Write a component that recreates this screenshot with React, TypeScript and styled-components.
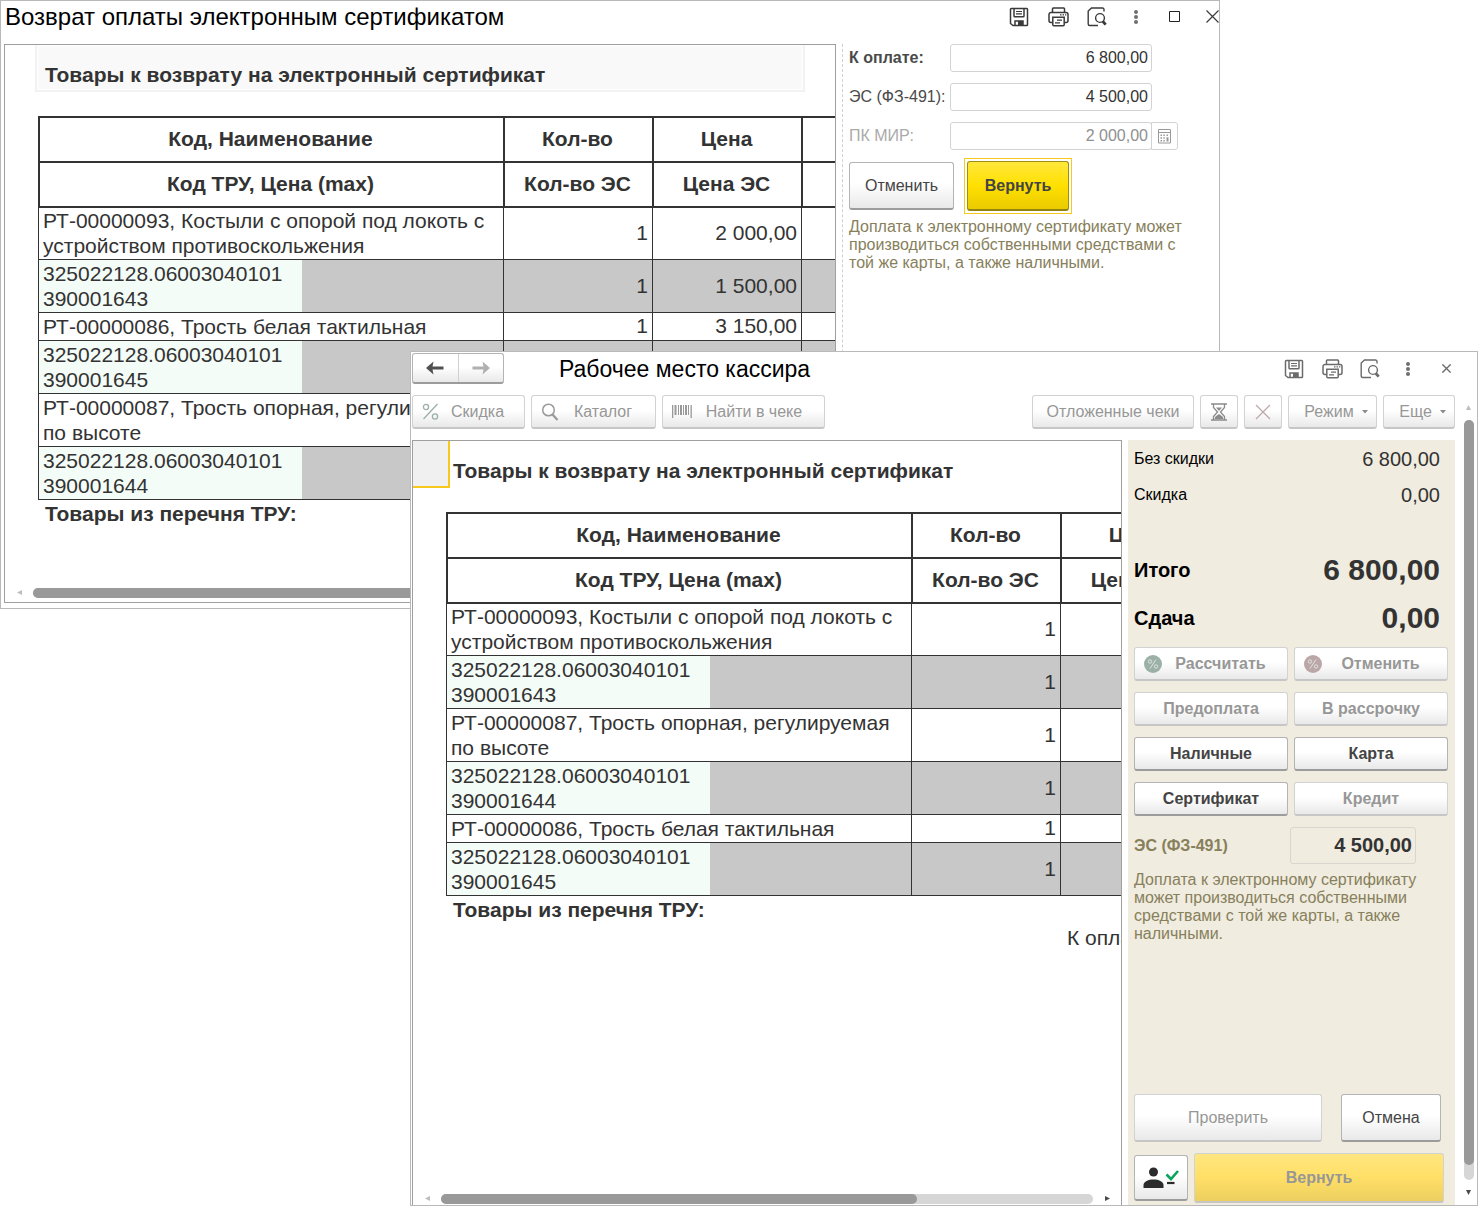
import React from "react";
import styled, { createGlobalStyle, css } from "styled-components";

const GlobalStyle = createGlobalStyle`
  *, *::before, *::after { box-sizing: border-box; }
  body {
    margin: 0;
    background: #fff;
    color: #333;
    font-family: "Liberation Sans", Arial, sans-serif;
    font-size: 16px;
    line-height: 18px;
  }
  button, input { font: inherit; color: inherit; }
`;

/* ---------- desktop and windows ---------- */

const Desktop = styled.main`
  display: grid;
  grid-template-columns: minmax(0, 1fr);
  min-height: 100vh;
`;

const AppWindow = styled.section`
  grid-area: 1 / 1;
  display: flex;
  flex-direction: column;
  background: #fff;
  border: 1px solid #b9b9b9;
`;

const RefundWindow = styled(AppWindow)`
  align-self: start;
  margin-right: 259px;
`;

const CashierWindow = styled(AppWindow)`
  z-index: 1;
  margin: 351px 1px 2px 410px;
`;

const TitleBar = styled.header<{ $front?: boolean }>`
  display: flex;
  align-items: center;
  justify-content: space-between;
  height: ${(p) => (p.$front ? 43 : 31)}px;
  padding: ${(p) => (p.$front ? "0 20px 10px 1px" : "0 0 0 4px")};
  margin-bottom: ${(p) => (p.$front ? 0 : 12)}px;
`;

const TitleGroup = styled.div`
  display: flex;
  align-items: center;
  gap: 55px;
`;

const WindowTitle = styled.h1<{ $large?: boolean }>`
  margin: 0;
  color: #000;
  font-size: ${(p) => (p.$large ? 24 : 23)}px;
  line-height: 28px;
  font-weight: 400;
  white-space: nowrap;
`;

const WindowTools = styled.div<{ $front?: boolean }>`
  display: flex;
  align-items: center;
  gap: ${(p) => (p.$front ? 16 : 17)}px;
  color: ${(p) => (p.$front ? "#6b6b6b" : "#3a3a3a")};
`;

const ToolButton = styled.button<{ $edge?: boolean }>`
  display: flex;
  align-items: center;
  justify-content: center;
  width: ${(p) => (p.$edge ? 14 : 22)}px;
  height: 24px;
  margin-left: ${(p) => (p.$edge ? 2 : 0)}px;
  padding: 0;
  border: 0;
  background: none;
`;

/* ---------- buttons and fields ---------- */

const PushButton = styled.button<{
  $width?: number;
  $tall?: boolean;
  $bold?: boolean;
  $icon?: boolean;
  $menu?: boolean;
}>`
  display: flex;
  align-items: center;
  justify-content: center;
  flex: none;
  width: ${(p) => (p.$width ? `${p.$width}px` : "auto")};
  height: ${(p) => (p.$tall ? 48 : 34)}px;
  padding: 0;
  border: 1px solid #b4b4b4;
  border-bottom: 2px solid #9c9c9c;
  border-radius: 3px;
  background: linear-gradient(#fff 45%, #e9e9e9);
  color: #444;
  font-weight: ${(p) => (p.$bold ? 700 : 400)};
  white-space: nowrap;
  &:disabled {
    color: #979797;
    border-color: #d2d2d2;
    border-bottom-color: #c6c6c6;
  }
  ${(p) =>
    p.$icon &&
    css`
      padding: 0 8px 0 9px;
      & > span { flex: 1; text-align: center; }
    `}
  ${(p) =>
    p.$menu &&
    css`
      gap: 8px;
      padding-left: 7px;
    `}
`;

const FocusFrame = styled.div`
  margin-left: 10px;
  padding: 2px;
  border: 1px solid #f8c81c;
`;

const PrimaryButton = styled(PushButton)`
  width: 102px;
  height: 50px;
  border: 1px solid #a08e10;
  border-bottom: 2px solid #93830f;
  background: linear-gradient(#ffe83c, #ffe000 50%, #eacb00);
  color: #444;
  font-weight: 700;
`;

const SubmitButton = styled(PushButton)`
  flex: 1;
  height: 50px;
  margin-right: 4px;
  background: linear-gradient(#ffe680, #ffdf66 50%, #eccf60);
  font-weight: 700;
`;

const TextInput = styled.input`
  width: 202px;
  height: 28px;
  padding: 0 3px;
  border: 1px solid #d3d3d3;
  border-radius: 3px;
  background: #fff;
  color: #333;
  text-align: right;
  &:disabled { color: #8f8f8f; }
`;

/* ---------- spreadsheet area ---------- */

const Sheet = styled.div<{ $open?: boolean }>`
  flex: 1;
  min-width: 0;
  display: flex;
  flex-direction: column;
  overflow: hidden;
  border: 1px solid #9f9f9f;
  border-bottom-width: ${(p) => (p.$open ? 0 : 1)}px;
`;

const Band = styled.div`
  display: flex;
  align-items: stretch;
  height: 47px;
  margin-bottom: 24px;
`;

const BandTitle = styled.h2<{ $marked?: boolean }>`
  display: flex;
  align-items: flex-end;
  margin: 0;
  font-size: 21px;
  line-height: 25px;
  white-space: nowrap;
  ${(p) =>
    p.$marked
      ? css`
          flex: 1;
          margin: 0 30px;
          padding: 0 8px 3px;
          border: 2px solid #f2f2f2;
          border-top: 0;
          background: #f9f9f9;
          box-shadow: inset 0 0 0 1px #fff;
        `
      : css`
          padding: 0 3px 5px;
        `}
`;

const ActiveCell = styled.div`
  width: 37px;
  border: solid #f8c81c;
  border-width: 0 2px 2px 0;
  background: #f0f0f0;
`;

const GoodsTable = styled.table`
  width: 912px;
  margin-left: 33px;
  table-layout: fixed;
  border-collapse: separate;
  border-spacing: 0;
  font-size: 21px;
  line-height: 25px;
`;

const HeadCell = styled.th`
  height: 45px;
  padding: 0 2px 2px 0;
  border: solid #333;
  border-width: 2px 0 0 2px;
`;

const NameCell = styled.td<{ $first?: boolean }>`
  padding: ${(p) => (p.$first ? "0 4px 1px" : "1px 4px")};
  border: solid #333;
  border-width: ${(p) => (p.$first ? 2 : 1)}px 0 0 1px;
`;

const CodeCell = styled(NameCell)`
  background: #f4fcf7;
`;

const ShadeCell = styled.td`
  background: #c8c8c8;
  border-top: 1px solid #333;
`;

const NumberCell = styled(NameCell)<{ $shade?: boolean }>`
  padding: 0 4px 2px;
  background: ${(p) => (p.$shade ? "#c8c8c8" : "transparent")};
  text-align: right;
  white-space: nowrap;
`;

const FootCell = styled.td<{ $closing?: boolean; $bold?: boolean }>`
  height: 28px;
  padding: 0 7px;
  border-top: ${(p) => (p.$closing ? "1px solid #333" : "0")};
  font-weight: ${(p) => (p.$bold ? 700 : 400)};
  white-space: nowrap;
`;

/* ---------- scroll bars ---------- */

const ScrollBar = styled.div<{ $vertical?: boolean; $low?: boolean }>`
  display: flex;
  align-items: center;
  ${(p) =>
    p.$vertical
      ? css`
          flex: none;
          flex-direction: column;
          width: 22px;
          padding-left: 5px;
        `
      : css`
          margin-top: auto;
          height: ${p.$low ? 12 : 18}px;
          padding-bottom: 1px;
        `}
`;

const ScrollEnd = styled.span<{ $faint?: boolean; $vertical?: boolean }>`
  display: flex;
  align-items: center;
  justify-content: center;
  flex: none;
  width: ${(p) => (p.$vertical ? 10 : 28)}px;
  height: ${(p) => (p.$vertical ? 25 : 10)}px;
  color: ${(p) => (p.$faint ? "#bdbdbd" : "#4a4a4a")};
`;

const ScrollTrack = styled.div<{ $vertical?: boolean }>`
  flex: 1;
  width: ${(p) => (p.$vertical ? "10px" : "auto")};
  height: ${(p) => (p.$vertical ? "auto" : "10px")};
  border-radius: 5px;
  background: #d6d6d6;
`;

const ScrollThumb = styled.div<{ $vertical?: boolean }>`
  width: ${(p) => (p.$vertical ? "10px" : "73%")};
  height: ${(p) => (p.$vertical ? "98%" : "10px")};
  border-radius: 5px;
  background: #999;
`;

/* ---------- refund window ---------- */

const RefundBody = styled.div`
  display: flex;
  min-height: 559px;
  margin: 0 0 5px 3px;
`;

const RefundSide = styled.form`
  flex: 0 0 377px;
  margin-left: 6px;
  padding: 0 25px 0 6px;
  border-left: 1px dashed #d0d0d0;
`;

const FieldRow = styled.div`
  display: flex;
  align-items: center;
  height: 28px;
  margin-bottom: 11px;
`;

const FieldLabel = styled.label<{ $bold?: boolean; $muted?: boolean }>`
  flex: 0 0 101px;
  color: ${(p) => (p.$muted ? "#aaa" : "#4a4a4a")};
  font-weight: ${(p) => (p.$bold ? 700 : 400)};
  white-space: nowrap;
`;

const CalcButton = styled.button`
  display: flex;
  align-items: center;
  justify-content: center;
  width: 27px;
  height: 28px;
  margin-left: -1px;
  padding: 0;
  border: 1px solid #d3d3d3;
  border-radius: 0 3px 3px 0;
  background: #fff;
  color: #999;
`;

const ActionRow = styled.div`
  display: flex;
  align-items: center;
  margin: -3px 0 4px;
`;

const Note = styled.p`
  margin: 0;
  color: #87805b;
`;

/* ---------- cashier window ---------- */

const NavGroup = styled.div`
  display: flex;
  width: 92px;
  height: 31px;
  border: 1px solid #b4b4b4;
  border-bottom: 2px solid #9c9c9c;
  border-radius: 3px;
  background: linear-gradient(#fff 45%, #e9e9e9);
`;

const NavButton = styled.button`
  display: flex;
  align-items: center;
  justify-content: center;
  flex: 1;
  padding: 0;
  border: 0;
  background: none;
  color: #505050;
  & + & { border-left: 1px solid #d0d0d0; }
  &:disabled { color: #b0b0b0; }
`;

const CashierBody = styled.div`
  flex: 1;
  display: flex;
  padding-left: 1px;
`;

const Workspace = styled.div`
  flex: 1;
  min-width: 0;
  display: flex;
  flex-direction: column;
`;

const Toolbar = styled.div`
  display: flex;
  justify-content: space-between;
  gap: 6px;
  margin-bottom: 11px;
`;

const ToolGroup = styled.div`
  display: flex;
  gap: 6px;
`;

const Split = styled.div`
  flex: 1;
  display: flex;
  gap: 6px;
`;

const PaySide = styled.aside`
  flex: 0 0 327px;
  display: flex;
  flex-direction: column;
  padding: 1px 7px 2px 6px;
  background: #f0ece0;
`;

const Totals = styled.dl`
  margin: 0 8px 5px 0;
`;

const TotalRow = styled.div<{ $strong?: boolean }>`
  display: flex;
  align-items: center;
  justify-content: space-between;
  height: ${(p) => (p.$strong ? 48 : 36)}px;
  color: #000;
  font-weight: ${(p) => (p.$strong ? 700 : 400)};
  font-size: ${(p) => (p.$strong ? 20 : 16)}px;
  dd {
    margin: 0;
    color: #333;
    font-size: ${(p) => (p.$strong ? 30 : 20)}px;
    line-height: 36px;
  }
`;

const TotalGap = styled.div`
  height: 33px;
`;

const PayGrid = styled.div`
  display: grid;
  grid-template-columns: 1fr 1fr;
  gap: 11px 6px;
  margin-bottom: 11px;
`;

const CertificateRow = styled.div`
  display: flex;
  align-items: center;
  justify-content: space-between;
  margin: 0 32px 7px 0;
`;

const CertificateLabel = styled.label`
  color: #87805b;
  font-weight: 700;
`;

const CertificateInput = styled.input`
  width: 126px;
  height: 37px;
  padding: 0 3px;
  border: 1px solid #d8d6cf;
  border-radius: 3px;
  background: transparent;
  color: #333;
  font-size: 20px;
  font-weight: 700;
  text-align: right;
`;

const BottomActions = styled.div`
  display: flex;
  flex-direction: column;
  gap: 11px;
  margin-top: auto;
`;

const BottomRow = styled.div`
  display: flex;
  align-items: center;
  gap: 6px;
`;

const SpacedRow = styled(BottomRow)`
  gap: 19px;
  padding-right: 7px;
`;

const StretchButton = styled(PushButton)`
  flex: 1;
`;

const UserButton = styled(PushButton)`
  width: 54px;
  height: 46px;
`;

/* ---------- icons ---------- */

const SaveIcon = () => (
  <svg width="20" height="20" viewBox="0 0 20 20" fill="none" stroke="currentColor" strokeWidth="1.5" aria-hidden="true">
    <path d="M2.300 1.500h15.400a.8.8 0 0 1 .8.8v15.400a.8.8 0 0 1-.8.8H4L1.500 16.500V2.300a.8.8 0 0 1 .8-.8z" />
    <path d="M5 1.500v7.500a.8.8 0 0 0 .8.8h8.400a.8.8 0 0 0 .8-.8V1.500" />
    <path d="M7 4.500h6M7 6.800h6" strokeWidth="1.200" />
    <path d="M6 18.500V14h8v4.500" />
    <path d="M9 14h5v4.500H9z" fill="currentColor" stroke="none" />
  </svg>
);

const PrintIcon = () => (
  <svg width="21" height="20" viewBox="0 0 21 20" fill="none" stroke="currentColor" strokeWidth="1.500" aria-hidden="true">
    <path d="M4.500 5.500V1.800a.8.8 0 0 1 .8-.8h10.400a.8.8 0 0 1 .8.8v3.700" />
    <path d="M4.500 15.500H3a2 2 0 0 1-2-2v-6a2 2 0 0 1 2-2h15a2 2 0 0 1 2 2v6a2 2 0 0 1-2 2h-1.500" />
    <path d="M4.800 10.200h11.400v7.600a1 1 0 0 1-1 1H5.800a1 1 0 0 1-1-1z" />
    <path d="M9 13.200h5M7 15.800h5" strokeWidth="1.300" />
    <path d="M12 7.800h1.500M14.500 7.800H16M17 7.800h1.300" strokeWidth="1.200" />
  </svg>
);

const PreviewIcon = () => (
  <svg width="20" height="20" viewBox="0 0 20 20" fill="none" stroke="currentColor" strokeWidth="1.400" aria-hidden="true">
    <path d="M17 4.500V2.500a1.500 1.500 0 0 0-1.500-1.500H4.500L1.200 4v13a1.500 1.500 0 0 0 1.500 1.500H11" />
    <circle cx="13" cy="11" r="4.400" />
    <path d="M15.700 14.300l3 3.300" strokeWidth="2.800" />
  </svg>
);

const DotsIcon = () => (
  <svg width="6" height="16" viewBox="0 0 6 16" fill="#6f6f6f" aria-hidden="true">
    <circle cx="3" cy="3" r="2" />
    <circle cx="3" cy="8" r="2" />
    <circle cx="3" cy="13" r="2" />
  </svg>
);

const MaximizeIcon = () => (
  <svg width="12" height="12" viewBox="0 0 12 12" fill="none" stroke="#222" aria-hidden="true">
    <path d="M.5.5h10v10H.5z" />
  </svg>
);

const CloseIcon = ({ size = 13, weight = 1.2 }: { size?: number; weight?: number }) => (
  <svg width={size} height={size} viewBox="0 0 13 13" fill="none" stroke="currentColor" strokeWidth={weight} aria-hidden="true">
    <path d="M.5.5l12 12M12.500.5l-12 12" />
  </svg>
);

const CalcIcon = () => (
  <svg width="13" height="15" viewBox="0 0 13 15" aria-hidden="true">
    <path d="M.5.5h12v13.500H.5z" fill="none" stroke="currentColor" />
    <path d="M.5 3.500h12" stroke="currentColor" />
    <path d="M2.500 5.500H4V7H2.500zM5.300 5.500h1.500V7H5.300zM8.500 5.500H10V7H8.500zM2.500 8.300H4v1.500H2.500zM5.300 8.300h1.500v1.500H5.300zM2.500 11H4v1.500H2.500zM5.300 11h1.500v1.500H5.300zM8.500 8.300h2v4.200h-2z" fill="currentColor" />
  </svg>
);

const ArrowIcon = ({ forward }: { forward?: boolean }) => (
  <svg width="18" height="14" viewBox="0 0 18 14" aria-hidden="true">
    <path
      d={forward ? "M18 7L10.500 .5 11.500 5.500H.5v3h11L10.500 13.500z" : "M0 7L7.500 .5 6.500 5.500h11v3h-11L7.500 13.500z"}
      fill="currentColor"
    />
  </svg>
);

const PercentIcon = () => (
  <svg width="17" height="17" viewBox="0 0 17 17" fill="none" stroke="#9bb0a8" strokeWidth="1.300" aria-hidden="true">
    <circle cx="4" cy="4" r="2.600" />
    <circle cx="13" cy="13.500" r="2.600" />
    <path d="M15.500 1L1.500 16" />
  </svg>
);

const SearchIcon = () => (
  <svg width="18" height="18" viewBox="0 0 18 18" fill="none" stroke="#999" strokeWidth="1.500" aria-hidden="true">
    <circle cx="7.500" cy="7" r="5.800" />
    <path d="M11.500 11.500l5 5.500" strokeWidth="2.200" />
  </svg>
);

const BarcodeIcon = () => (
  <svg width="20" height="13" viewBox="0 0 20 13" fill="#999" aria-hidden="true">
    <path d="M0 0h1.300v13H0zM2.500 0h2v10h-2zM6 0h1v10H6zM8 0h2v10H8zM11 0h1v10h-1zM13 0h2v10h-2zM16 0h1v10h-1zM18.500 0h1.300v13h-1.300z" />
  </svg>
);

const HourglassIcon = () => (
  <svg width="16" height="18" viewBox="0 0 16 18" fill="none" stroke="#8b8b8b" strokeWidth="1.300" aria-hidden="true">
    <path d="M0 1h16M0 17h16" strokeWidth="1.600" />
    <path d="M2.500 1v3.500L6.500 9l-4 4.500V17M13.500 1v3.500L9.500 9l4 4.500V17" />
    <path d="M5 4.500h6L8 8zM3.500 16l1-2.500L8 11l3.500 2.500 1 2.500z" fill="#8b8b8b" stroke="none" />
  </svg>
);

const CancelIcon = () => (
  <svg width="16" height="16" viewBox="0 0 16 16" fill="none" stroke="#bda9a9" strokeWidth="1.300" aria-hidden="true">
    <path d="M1 1l14 14M15 1L1 15" />
  </svg>
);

const RoundPercentIcon = ({ tint }: { tint: string }) => (
  <svg width="18" height="18" viewBox="0 0 18 18" aria-hidden="true">
    <circle cx="9" cy="9" r="9" fill={tint} />
    <g fill="none" stroke="#dfe3e1" strokeWidth="1">
      <circle cx="6" cy="6.500" r="1.700" />
      <circle cx="12" cy="11.500" r="1.700" />
      <path d="M12 4.500l-6 9" />
    </g>
  </svg>
);

const UserCheckIcon = () => (
  <svg width="36" height="22" viewBox="0 0 36 22" aria-hidden="true">
    <circle cx="10.500" cy="5" r="4.500" fill="#2b2b2b" />
    <path d="M.5 21v-3c0-3.500 5-5.500 10-5.500s10 2 10 5.500v3z" fill="#2b2b2b" />
    <path d="M23.500 7.500l4.500 4.500 7-8" fill="none" stroke="#0aa55c" strokeWidth="2.600" />
    <path d="M24 16h7.500" stroke="#2b2b2b" strokeWidth="2.200" />
  </svg>
);

const CaretIcon = () => (
  <svg width="6" height="4" viewBox="0 0 6 4" fill="#8b8b8b" aria-hidden="true">
    <path d="M0 0h6L3 3.500z" />
  </svg>
);

const scrollPaths = {
  left: "M5 0v5L0 2.500z",
  right: "M0 0l5 2.500L0 5z",
  up: "M0 5L2.500 0 5 5z",
  down: "M0 0h5L2.500 5z",
};

const ScrollIcon = ({ to }: { to: keyof typeof scrollPaths }) => (
  <svg width="5" height="5" viewBox="0 0 5 5" fill="currentColor" aria-hidden="true">
    <path d={scrollPaths[to]} />
  </svg>
);

/* ---------- composed parts ---------- */

type Item = { name: string; code: string; price: string; certPrice: string };

const crutches: Item = {
  name: "РТ-00000093, Костыли с опорой под локоть с устройством противоскольжения",
  code: "325022128.06003040101 390001643",
  price: "2 000,00",
  certPrice: "1 500,00",
};
const whiteCane: Item = {
  name: "РТ-00000086, Трость белая тактильная",
  code: "325022128.06003040101 390001645",
  price: "3 150,00",
  certPrice: "",
};
const supportCane: Item = {
  name: "РТ-00000087, Трость опорная, регулируемая по высоте",
  code: "325022128.06003040101 390001644",
  price: "",
  certPrice: "",
};

const Goods = ({ items }: { items: Item[] }) => (
  <GoodsTable>
    <colgroup>
      <col style={{ width: 264 }} />
      <col style={{ width: 201 }} />
      <col style={{ width: 149 }} />
      <col style={{ width: 149 }} />
      <col style={{ width: 149 }} />
    </colgroup>
    <thead>
      <tr>
        <HeadCell colSpan={2}>Код, Наименование</HeadCell>
        <HeadCell>Кол-во</HeadCell>
        <HeadCell>Цена</HeadCell>
        <HeadCell />
      </tr>
      <tr>
        <HeadCell colSpan={2}>Код ТРУ, Цена (max)</HeadCell>
        <HeadCell>Кол-во ЭС</HeadCell>
        <HeadCell>Цена ЭС</HeadCell>
        <HeadCell />
      </tr>
    </thead>
    <tbody>
      {items.map((item, i) => (
        <React.Fragment key={item.code}>
          <tr>
            <NameCell colSpan={2} $first={i === 0}>{item.name}</NameCell>
            <NumberCell $first={i === 0}>1</NumberCell>
            <NumberCell $first={i === 0}>{item.price}</NumberCell>
            <NumberCell $first={i === 0} />
          </tr>
          <tr>
            <CodeCell>{item.code}</CodeCell>
            <ShadeCell />
            <NumberCell $shade>1</NumberCell>
            <NumberCell $shade>{item.certPrice}</NumberCell>
            <NumberCell $shade />
          </tr>
        </React.Fragment>
      ))}
    </tbody>
    <tfoot>
      <tr>
        <FootCell colSpan={5} $closing $bold>Товары из перечня ТРУ:</FootCell>
      </tr>
      <tr>
        <FootCell colSpan={3} />
        <FootCell colSpan={2}>К оплате</FootCell>
      </tr>
    </tfoot>
  </GoodsTable>
);

const HorizontalScroll = ({ low }: { low?: boolean }) => (
  <ScrollBar $low={low}>
    <ScrollEnd $faint><ScrollIcon to="left" /></ScrollEnd>
    <ScrollTrack><ScrollThumb /></ScrollTrack>
    <ScrollEnd><ScrollIcon to="right" /></ScrollEnd>
  </ScrollBar>
);

const DocumentTools = () => (
  <>
    <ToolButton aria-label="Сохранить"><SaveIcon /></ToolButton>
    <ToolButton aria-label="Печать"><PrintIcon /></ToolButton>
    <ToolButton aria-label="Просмотр"><PreviewIcon /></ToolButton>
    <ToolButton aria-label="Меню"><DotsIcon /></ToolButton>
  </>
);

const sheetTitle = "Товары к возврату на электронный сертификат";
const note =
  "Доплата к электронному сертификату может производиться собственными средствами с той же карты, а также наличными.";

export default function App() {
  return (
    <>
      <GlobalStyle />
      <Desktop>
        <RefundWindow>
          <TitleBar>
            <WindowTitle $large>Возврат оплаты электронным сертификатом</WindowTitle>
            <WindowTools>
              <DocumentTools />
              <ToolButton aria-label="Развернуть"><MaximizeIcon /></ToolButton>
              <ToolButton $edge aria-label="Закрыть"><CloseIcon /></ToolButton>
            </WindowTools>
          </TitleBar>
          <RefundBody>
            <Sheet>
              <Band><BandTitle $marked>{sheetTitle}</BandTitle></Band>
              <Goods items={[crutches, whiteCane, supportCane]} />
              <HorizontalScroll />
            </Sheet>
            <RefundSide onSubmit={(e) => e.preventDefault()}>
              <FieldRow>
                <FieldLabel htmlFor="due" $bold>К оплате:</FieldLabel>
                <TextInput id="due" defaultValue="6 800,00" />
              </FieldRow>
              <FieldRow>
                <FieldLabel htmlFor="cert">ЭС (ФЗ-491):</FieldLabel>
                <TextInput id="cert" defaultValue="4 500,00" />
              </FieldRow>
              <FieldRow>
                <FieldLabel htmlFor="mir" $muted>ПК МИР:</FieldLabel>
                <TextInput id="mir" defaultValue="2 000,00" disabled />
                <CalcButton type="button" aria-label="Калькулятор"><CalcIcon /></CalcButton>
              </FieldRow>
              <ActionRow>
                <PushButton type="button" $width={105} $tall>Отменить</PushButton>
                <FocusFrame>
                  <PrimaryButton type="submit">Вернуть</PrimaryButton>
                </FocusFrame>
              </ActionRow>
              <Note>{note}</Note>
            </RefundSide>
          </RefundBody>
        </RefundWindow>

        <CashierWindow>
          <TitleBar $front>
            <TitleGroup>
              <NavGroup>
                <NavButton aria-label="Назад"><ArrowIcon /></NavButton>
                <NavButton aria-label="Вперед" disabled><ArrowIcon forward /></NavButton>
              </NavGroup>
              <WindowTitle>Рабочее место кассира</WindowTitle>
            </TitleGroup>
            <WindowTools $front>
              <DocumentTools />
              <ToolButton aria-label="Закрыть"><CloseIcon size={9} weight={2} /></ToolButton>
            </WindowTools>
          </TitleBar>
          <CashierBody>
            <Workspace>
              <Toolbar>
                <ToolGroup>
                  <PushButton $width={113} $icon disabled><PercentIcon /><span>Скидка</span></PushButton>
                  <PushButton $width={125} $icon disabled><SearchIcon /><span>Каталог</span></PushButton>
                  <PushButton $width={163} $icon disabled><BarcodeIcon /><span>Найти в чеке</span></PushButton>
                </ToolGroup>
                <ToolGroup>
                  <PushButton $width={162} disabled>Отложенные чеки</PushButton>
                  <PushButton $width={38} disabled aria-label="Отложить чек"><HourglassIcon /></PushButton>
                  <PushButton $width={38} disabled aria-label="Удалить"><CancelIcon /></PushButton>
                  <PushButton $width={89} $menu disabled aria-haspopup="menu"><span>Режим</span><CaretIcon /></PushButton>
                  <PushButton $width={72} $menu disabled aria-haspopup="menu"><span>Еще</span><CaretIcon /></PushButton>
                </ToolGroup>
              </Toolbar>
              <Split>
                <Sheet $open>
                  <Band>
                    <ActiveCell />
                    <BandTitle>{sheetTitle}</BandTitle>
                  </Band>
                  <Goods items={[crutches, supportCane, whiteCane]} />
                  <HorizontalScroll low />
                </Sheet>
                <PaySide>
                  <Totals>
                    <TotalRow><dt>Без скидки</dt><dd>6 800,00</dd></TotalRow>
                    <TotalRow><dt>Скидка</dt><dd>0,00</dd></TotalRow>
                    <TotalGap />
                    <TotalRow $strong><dt>Итого</dt><dd>6 800,00</dd></TotalRow>
                    <TotalRow $strong><dt>Сдача</dt><dd>0,00</dd></TotalRow>
                  </Totals>
                  <PayGrid>
                    <PushButton $bold $icon disabled><RoundPercentIcon tint="#9bb0a6" /><span>Рассчитать</span></PushButton>
                    <PushButton $bold $icon disabled><RoundPercentIcon tint="#bba7a7" /><span>Отменить</span></PushButton>
                    <PushButton $bold disabled>Предоплата</PushButton>
                    <PushButton $bold disabled>В рассрочку</PushButton>
                    <PushButton $bold>Наличные</PushButton>
                    <PushButton $bold>Карта</PushButton>
                    <PushButton $bold>Сертификат</PushButton>
                    <PushButton $bold disabled>Кредит</PushButton>
                  </PayGrid>
                  <CertificateRow>
                    <CertificateLabel htmlFor="cert-sum">ЭС (ФЗ-491)</CertificateLabel>
                    <CertificateInput id="cert-sum" defaultValue="4 500,00" />
                  </CertificateRow>
                  <Note>{note}</Note>
                  <BottomActions>
                    <SpacedRow>
                      <StretchButton $tall disabled>Проверить</StretchButton>
                      <PushButton $width={100} $tall>Отмена</PushButton>
                    </SpacedRow>
                    <BottomRow>
                      <UserButton aria-label="Покупатель"><UserCheckIcon /></UserButton>
                      <SubmitButton disabled>Вернуть</SubmitButton>
                    </BottomRow>
                  </BottomActions>
                </PaySide>
              </Split>
            </Workspace>
            <ScrollBar $vertical>
              <ScrollEnd $vertical $faint><ScrollIcon to="up" /></ScrollEnd>
              <ScrollTrack $vertical><ScrollThumb $vertical /></ScrollTrack>
              <ScrollEnd $vertical><ScrollIcon to="down" /></ScrollEnd>
            </ScrollBar>
          </CashierBody>
        </CashierWindow>
      </Desktop>
    </>
  );
}
